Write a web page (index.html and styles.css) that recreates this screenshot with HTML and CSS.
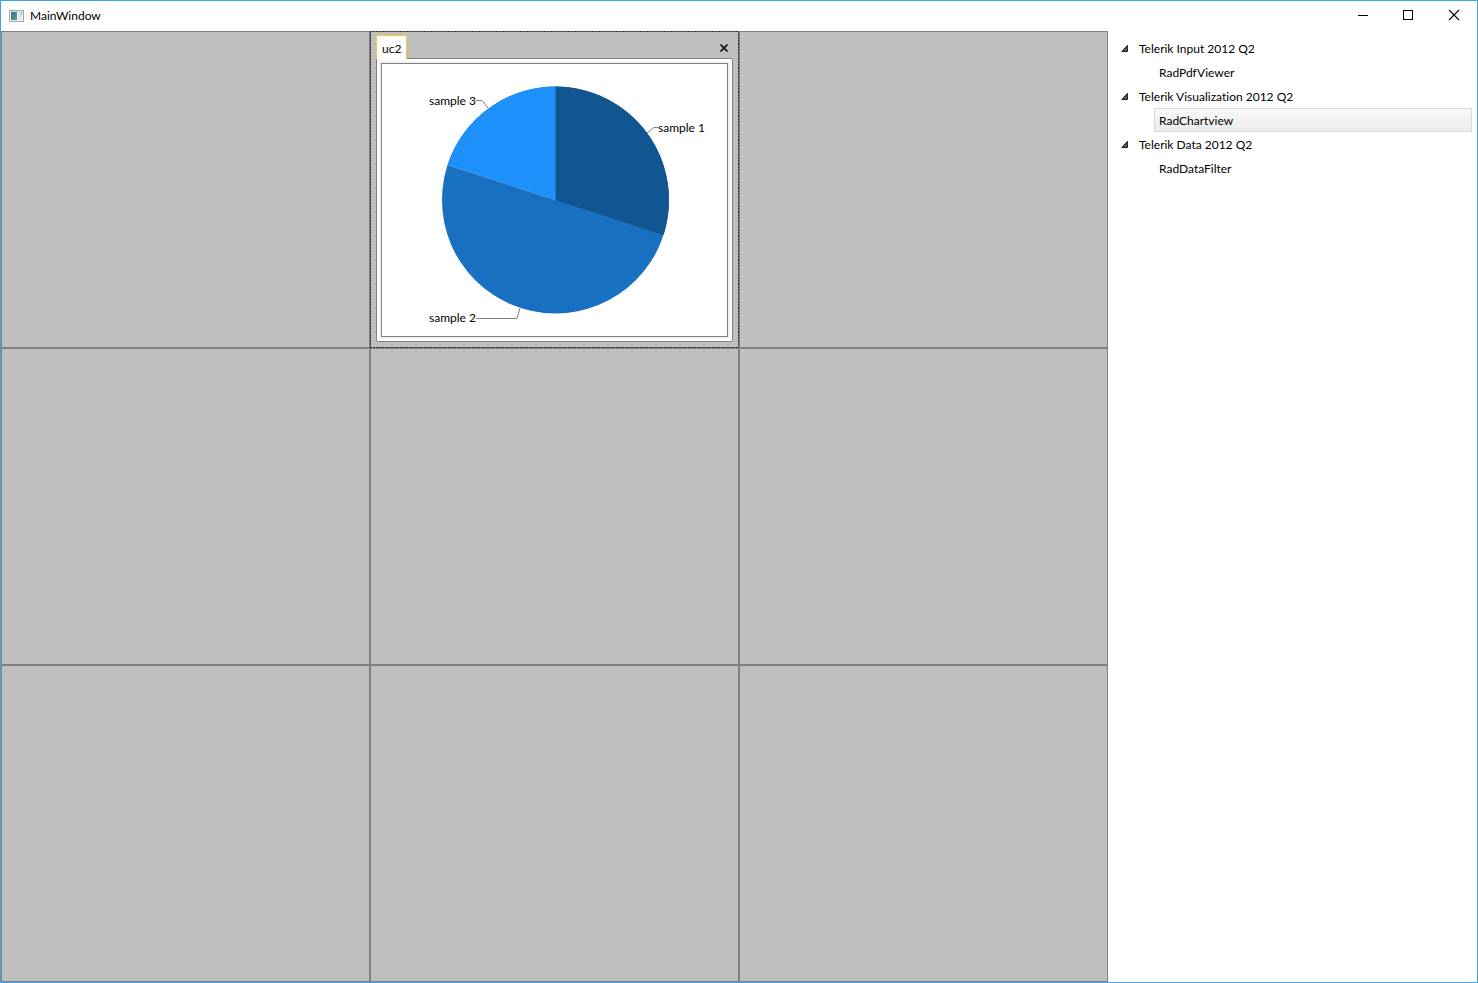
FILE: index.html
```html
<!DOCTYPE html>
<html lang="en">
<head>
<meta charset="utf-8">
<title>MainWindow</title>
<link rel="stylesheet" href="styles.css">
</head>
<body>
<div class="window">
  <header class="titlebar">
    <svg class="app-icon" width="15" height="12" viewBox="0 0 15 12" aria-hidden="true">
      <defs><linearGradient id="pane" x1="0" y1="0" x2="1" y2="1"><stop offset="0" stop-color="#3c6a9c"/><stop offset="1" stop-color="#4fa67c"/></linearGradient></defs>
      <rect x=".5" y=".5" width="14" height="11" fill="#f2f3f4" stroke="#a3a7aa"/>
      <rect x="1" y="1" width="13" height="1" fill="#d5d9dc"/>
      <rect x="2" y="2" width="6" height="8" fill="url(#pane)"/>
      <rect x="9" y="2" width="3" height="8" fill="#dfe6ec"/>
      <rect x="12" y="2" width="1" height="3" fill="#7bb39b"/>
    </svg>
    <h1 class="title">MainWindow</h1>
    <div class="controls">
      <button class="control" aria-label="Minimize"><svg width="10" height="10" viewBox="0 0 10 10"><path d="M1 5.5H11" stroke="#000"/></svg></button>
      <button class="control" aria-label="Maximize"><svg width="10" height="10" viewBox="0 0 10 10"><rect x=".5" y=".5" width="9" height="9" fill="none" stroke="#000"/></svg></button>
      <button class="control" aria-label="Close"><svg width="10" height="10" viewBox="0 0 10 10"><path d="M0 0L10 10M10 0L0 10" stroke="#000" stroke-width="1.1"/></svg></button>
    </div>
  </header>
  <div class="content">
    <main class="board">
      <div class="cell"></div>
      <div class="cell focused">
        <section class="panel">
          <div class="tabs" role="tablist">
            <button class="tab" role="tab" aria-selected="true">uc2</button>
            <button class="tab-close" aria-label="Close tab"><svg width="8" height="8" viewBox="0 0 8 8"><path d="M.5 .5L7.5 7.5M7.5 .5L.5 7.5" stroke="#000" stroke-width="1.6"/></svg></button>
          </div>
          <div class="pane" role="tabpanel">
            <div class="chart">
              <svg class="pie" viewBox="0 0 345 272" role="img" aria-label="Pie chart">
                <circle cx="173.5" cy="136" r="113.5" fill="#1870c0"/>
                <path d="M173.5 136V22.5A113.5 113.5 0 0 1 281.4 171.1Z" fill="#115591"/>
                <path d="M173.5 136L65.6 100.9A113.5 113.5 0 0 1 173.5 22.5Z" fill="#1e90fa"/>
                <path d="M173.5 136L65.6 100.9" stroke="#58a5ea" stroke-width=".7"/>
                <g fill="none" stroke="#808080">
                  <path d="M265 69L272 63.5H276"/>
                  <path d="M94 254.5H135L138 244"/>
                  <path d="M94 36.5H100L106 44"/>
                </g>
                <text class="label" x="276" y="68">sample 1</text>
                <text class="label" x="94" y="258" text-anchor="end">sample 2</text>
                <text class="label" x="94" y="41" text-anchor="end">sample 3</text>
              </svg>
            </div>
          </div>
        </section>
      </div>
      <div class="cell"></div>
      <div class="cell"></div>
      <div class="cell"></div>
      <div class="cell"></div>
      <div class="cell"></div>
      <div class="cell"></div>
      <div class="cell"></div>
    </main>
    <aside class="sidebar">
      <ul class="tree">
        <li>
          <button class="group" aria-expanded="true"><svg class="arrow" width="8" height="8" viewBox="0 0 8 8"><path d="M6.5 1.2V7.5H.8Z" fill="#555" stroke="#222"/></svg>Telerik Input 2012 Q2</button>
          <ul class="items"><li><button class="item">RadPdfViewer</button></li></ul>
        </li>
        <li>
          <button class="group" aria-expanded="true"><svg class="arrow" width="8" height="8" viewBox="0 0 8 8"><path d="M6.5 1.2V7.5H.8Z" fill="#555" stroke="#222"/></svg>Telerik Visualization 2012 Q2</button>
          <ul class="items"><li><button class="item selected">RadChartview</button></li></ul>
        </li>
        <li>
          <button class="group" aria-expanded="true"><svg class="arrow" width="8" height="8" viewBox="0 0 8 8"><path d="M6.5 1.2V7.5H.8Z" fill="#555" stroke="#222"/></svg>Telerik Data 2012 Q2</button>
          <ul class="items"><li><button class="item">RadDataFilter</button></li></ul>
        </li>
      </ul>
    </aside>
  </div>
</div>
</body>
</html>
```
FILE: styles.css
```css
* { box-sizing: border-box; }

body {
  margin: 0;
  background: #fff;
  color: #000;
  font: 12px/16px "Segoe UI", Lato, sans-serif;
  font-variant-ligatures: none;
}

button {
  padding: 0;
  border: 0;
  background: none;
  color: inherit;
  font: inherit;
}

svg {
  display: block;
  overflow: visible;
}

.window {
  display: flex;
  flex-direction: column;
  height: 100vh;
  border: 1px solid #3ba7eb;
}

.titlebar {
  display: flex;
  flex: none;
  align-items: center;
  height: 30px;
  padding-left: 8px;
}

.title {
  margin: 0 0 0 6px;
  font-size: 12px;
  font-weight: 400;
}

.controls {
  display: flex;
  height: 100%;
  margin-left: auto;
}

.control {
  display: flex;
  align-items: center;
  justify-content: center;
  width: 46px;
  height: 28px;
}

.content {
  display: grid;
  grid-template-columns: 3fr 1fr;
  grid-template-rows: minmax(0, 1fr);
  flex: 1;
  min-height: 0;
}

.board {
  display: grid;
  grid-template-columns: repeat(3, minmax(0, 1fr));
  grid-template-rows: repeat(3, minmax(0, 1fr));
}

.cell {
  border: 1px solid #808080;
  background: #bfbfbf;
}

.focused {
  padding: 4px 6px 6px;
  border: 0;
  background:
    repeating-linear-gradient(90deg, #333 0 2px, #808080 2px 3px) top / 100% 1px no-repeat,
    repeating-linear-gradient(90deg, #333 0 2px, #808080 2px 3px) bottom / 100% 1px no-repeat,
    repeating-linear-gradient(#333 0 2px, #808080 2px 3px) left / 1px 100% no-repeat,
    repeating-linear-gradient(#333 0 2px, #808080 2px 3px) right / 1px 100% no-repeat,
    #bfbfbf;
}

.panel {
  display: flex;
  flex-direction: column;
  height: 100%;
}

.tabs {
  display: flex;
  flex: none;
  align-items: flex-start;
  justify-content: space-between;
  height: 23px;
  padding-right: 5px;
}

.tab {
  z-index: 1;
  height: 24px;
  padding: 2px 5px 0;
  border: 1px solid #ffc92b;
  border-bottom: 0;
  background: #fff;
}

.tab-close { padding: 9px 0 6px; }

.pane {
  flex: 1;
  min-height: 0;
  padding: 4px;
  border: 1px solid #808080;
  border-radius: 0 2px 2px 2px;
  background: #fff;
}

.chart {
  height: 100%;
  border: 1px solid #808080;
  outline: 2px solid #f2f2f2;
}

.pie {
  width: 100%;
  height: 100%;
}

.label { font-size: 12px; }

.sidebar { padding: 5px 5px 5px 6px; }

.tree,
.items {
  margin: 0;
  padding: 0;
  list-style: none;
}

.items { padding-left: 40px; }

.group,
.item {
  display: flex;
  align-items: center;
  width: 100%;
  height: 24px;
  padding-top: 2px;
}

.group {
  gap: 10px;
  padding-left: 7px;
}

.arrow { margin-bottom: 2px; }

.item {
  padding-left: 4px;
  border: 1px solid transparent;
  border-radius: 1px;
}

.selected {
  border-color: #d9d9d9;
  background: linear-gradient(#f8f8f9, #ececec);
}
```
